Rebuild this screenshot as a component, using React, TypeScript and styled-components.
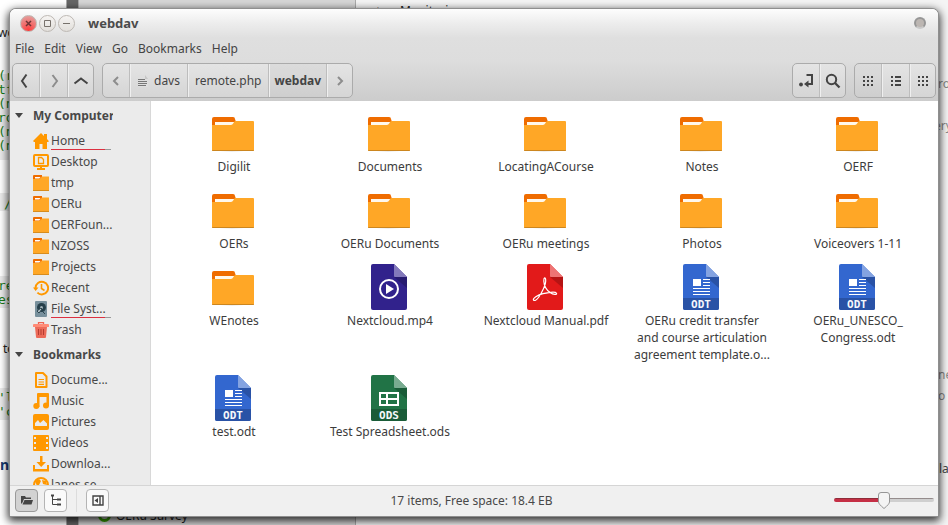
import React, { useState } from "react";
import styled, { createGlobalStyle, css } from "styled-components";

const GlobalStyle = createGlobalStyle`
  * { box-sizing: border-box; }
  body {
    margin: 0;
    overflow: hidden;
    font-family: "Noto Sans", sans-serif;
    font-size: 12px;
    line-height: 17px;
    color: #3c3c3c;
  }
  button {
    font: inherit;
    color: inherit;
    background: none;
    border: 0;
    padding: 0;
    margin: 0;
  }
  svg { display: block; flex: none; }
`;

/* ---------- desktop and the windows behind ---------- */

const Desktop = styled.div`
  position: relative;
  height: 100vh;
  padding: 9px 10px;
  overflow: hidden;
  background: #fff;
`;

const Behind = styled.div`
  position: absolute;
  inset: 0;
  overflow: hidden;
`;

const BackPane = styled.div<{ $x: number; $w?: number; $bg: string }>`
  position: absolute;
  top: 0;
  bottom: 0;
  left: ${(p) => p.$x}px;
  ${(p) => (p.$w ? `width: ${p.$w}px;` : "right: 0;")}
  background: ${(p) => p.$bg};
  border-left: 1px solid #aaa;
`;

const Shade = styled.div<{ $y: number; $h: number }>`
  position: absolute;
  left: 0;
  width: 10px;
  top: ${(p) => p.$y}px;
  height: ${(p) => p.$h}px;
  background: #ebebeb;
`;

const Scrap = styled.span<{ $x: number; $y: number; $color?: string; $mono?: boolean; $bold?: boolean }>`
  position: absolute;
  left: ${(p) => p.$x}px;
  top: ${(p) => p.$y}px;
  white-space: pre;
  color: ${(p) => p.$color ?? "#222"};
  ${(p) =>
    p.$bold &&
    css`
      font-weight: 700;
      font-size: 14px;
    `}
  ${(p) =>
    p.$mono &&
    css`
      font-family: "DejaVu Sans Mono", monospace;
      font-size: 13px;
    `}
`;

const Ring = styled.span`
  position: absolute;
  left: 98px;
  top: 509px;
  width: 13px;
  height: 13px;
  border: 3px solid #36a300;
  border-radius: 50%;
`;

/* ---------- window ---------- */

const WindowShadow = styled.div`
  position: relative;
  height: 100%;
  border-radius: 6px 6px 1px 1px;
  box-shadow: 0 0 0 1px #8f8f8f, 0 3px 9px 2px rgba(0, 0, 0, 0.8);
`;

const Window = styled.main`
  display: flex;
  flex-direction: column;
  height: 100%;
  border-radius: 6px 6px 0 0;
  overflow: hidden;
  background: #fff;
`;

const Header = styled.header`
  flex: none;
  background: linear-gradient(#fdfdfd 0, #ededed 14px, #dfdfdf 29px, #dddddd 52px, #cccccc 92px);
`;

const TitleBar = styled.div`
  display: flex;
  align-items: center;
  height: 28px;
  padding: 0 12px 0 10px;
  color: #4b4b4b;
`;

const WindowButtons = styled.div`
  display: flex;
  gap: 2px;
  margin-right: 13px;
`;

const WindowButton = styled.button<{ $close?: boolean }>`
  display: grid;
  place-items: center;
  width: 17px;
  height: 17px;
  border-radius: 50%;
  border: 1px solid #bdb8b3;
  color: ${(p) => (p.$close ? "#6d3434" : "#77716b")};
  background: ${(p) =>
    p.$close ? "radial-gradient(circle at 50% 95%, #ff3c3c, #e59a98 85%)" : "linear-gradient(#f6f4f2, #e2dfdb)"};
`;

const Title = styled.h1`
  flex: 1;
  margin: 0;
  font-size: 13px;
  font-weight: 700;
`;

const RoundDot = styled.button`
  width: 12px;
  height: 12px;
  border-radius: 50%;
  border: 2px solid #969696;
  border-bottom-color: #c9c9c9;
  background: #bcb6b2;
`;

const MenuBar = styled.nav`
  display: flex;
  align-items: center;
  gap: 10px;
  height: 23px;
  padding-left: 5px;
  color: #444;
`;

const ToolBar = styled.div`
  display: flex;
  align-items: center;
  gap: 8px;
  height: 41px;
  padding: 0 2px;
`;

const Spacer = styled.div`
  flex: 1;
`;

const ButtonGroup = styled.div`
  display: flex;
  height: 35px;
  border: 1px solid #ababab;
  border-radius: 5px;
  overflow: hidden;
  background: linear-gradient(#e4e4e4, #d5d5d5);
`;

const ToolButton = styled.button<{ $pad?: number; $active?: boolean; $dim?: boolean; $wide?: boolean }>`
  display: flex;
  align-items: center;
  justify-content: center;
  gap: 5px;
  min-width: ${(p) => (p.$wide ? 28 : 26)}px;
  padding: 0 ${(p) => p.$pad ?? 0}px;
  color: ${(p) => (p.$dim ? "#8d8d8d" : "#444")};
  font-weight: ${(p) => (p.$active ? 700 : 400)};
  background: ${(p) => (p.$active ? "rgba(0,0,0,0.03)" : "none")};
  & + & {
    border-left: 1px solid #bdbdbd;
    box-shadow: inset 1px 0 #efefef;
  }
`;

const Body = styled.div`
  display: flex;
  flex: 1;
  min-height: 0;
`;

const SideBar = styled.aside`
  flex: none;
  width: 141px;
  overflow: hidden;
  background: #ebebeb;
  border-right: 1px solid #d8d8d8;
  color: #484848;
`;

const SectionTitle = styled.button`
  display: flex;
  align-items: center;
  gap: 10px;
  width: 103px;
  height: 29px;
  padding-left: 5px;
  overflow: hidden;
  white-space: nowrap;
  font-weight: 700;
`;

const Places = styled.ul`
  list-style: none;
  margin: 0;
  padding: 0 39px 0 23px;
`;

const Place = styled.button`
  display: grid;
  grid-template-columns: 16px 1fr;
  align-items: center;
  column-gap: 2px;
  width: 100%;
  height: 21px;
  text-align: left;
  white-space: nowrap;
`;

const PlaceName = styled.span<{ $usage?: boolean }>`
  height: 19px;
  line-height: 19px;
  ${(p) =>
    p.$usage &&
    css`
      background: linear-gradient(90deg, #dc3040 90%, #999 90%) 0 100% / 100% 1px no-repeat;
    `}
`;

const Files = styled.section`
  flex: 1;
  display: grid;
  grid-template-columns: repeat(auto-fill, 156px);
  align-content: start;
  padding: 8px 2px 8px 4px;
  overflow: hidden;
`;

const File = styled.button`
  display: flex;
  flex-direction: column;
  align-items: center;
  justify-content: flex-start;
  gap: 1px;
  padding-bottom: 11px;
`;

const FileName = styled.span`
  padding-left: 2px;
  white-space: pre-line;
`;

const StatusBar = styled.footer`
  display: flex;
  flex: none;
  align-items: center;
  gap: 6px;
  height: 31px;
  padding: 0 4px 2px 5px;
  background: #f0f0f0;
  border-top: 1px solid #d5d5d5;
  color: #484848;
`;

const StatusButton = styled.button<{ $pressed?: boolean }>`
  display: grid;
  place-items: center;
  width: 23px;
  height: 23px;
  border: 1px solid ${(p) => (p.$pressed ? "#9a9a9a" : "#b4b4b4")};
  border-radius: 4px;
  background: ${(p) => (p.$pressed ? "#d2d2d2" : "#fafafa")};
  color: #444;
`;

const Divider = styled.span`
  width: 1px;
  height: 23px;
  margin: 0 3px;
  background: #dcdcdc;
`;

const StatusText = styled.output`
  flex: 1;
  text-align: center;
`;

const thumb = encodeURIComponent(
  `<svg xmlns="http://www.w3.org/2000/svg" width="12" height="17"><path d="M3 .5h6Q11.500.5 11.500 3v7Q11.500 12 6 16.500 .5 12 .5 10V3Q.5.5 3 .5z" fill="#f4f4f4" stroke="#969696"/></svg>`
);

const Zoom = styled.input<{ $fill: number }>`
  appearance: none;
  width: 100px;
  height: 17px;
  margin: 0;
  background: none;
  &::-webkit-slider-runnable-track {
    height: 4px;
    border-radius: 2px;
    background: linear-gradient(rgba(60, 40, 40, 0.4) 1px, transparent 1px),
      linear-gradient(90deg, #c52f45 ${(p) => p.$fill}%, #cfcfcf ${(p) => p.$fill}%);
  }
  &::-webkit-slider-thumb {
    appearance: none;
    width: 12px;
    height: 17px;
    margin-top: -6px;
    background: url("data:image/svg+xml,${thumb}") center no-repeat;
  }
`;

/* ---------- icons ---------- */

const Chevron = ({ d }: { d: string }) => (
  <svg width="16" height="16" viewBox="0 0 16 16" fill="none" stroke="currentColor" strokeWidth="2">
    <path d={d} />
  </svg>
);

const DotGrid = () => (
  <svg width="12" height="12" fill="currentColor">
    {[1, 5, 9].flatMap((y) => [1, 5, 9].map((x) => <rect key={`${x}-${y}`} x={x} y={y} width="2" height="2" />))}
  </svg>
);

const ListGlyph = () => (
  <svg width="12" height="12" fill="currentColor">
    {[1, 5, 9].map((y) => (
      <path key={y} d={`M1 ${y}h2v2H1zM5 ${y}h6v2H5z`} />
    ))}
  </svg>
);

const EnterGlyph = () => (
  <svg width="16" height="16" fill="none" stroke="currentColor" strokeWidth="2">
    <path d="M8.500 2H14v9H9" />
    <path d="M10.500 7.500v7L6 11z" fill="currentColor" stroke="none" />
    <circle cx="3" cy="11.500" r="1.900" fill="currentColor" stroke="none" />
  </svg>
);

const SearchGlyph = () => (
  <svg width="16" height="16" fill="none" stroke="currentColor" strokeWidth="2">
    <circle cx="6.500" cy="6.500" r="4.700" />
    <path d="M10 10l4.500 4.500" strokeWidth="2.300" />
  </svg>
);

const PageGlyph = () => (
  <svg width="12" height="14">
    <path d="M1 1h7l3 4v8H1z" fill="#dedede" />
    <path d="M8 1v4h3z" fill="#c6c6c6" />
    <path d="M1 5.500h7M1 7.500h9M1 9.500h9M1 11.500h8" stroke="#777" />
  </svg>
);

const Folder = () => (
  <svg width="48" height="48">
    <ellipse cx="23" cy="41" rx="17" ry="1.500" fill="#ddd" />
    <path d="M3 20V10q0-2 2-2h19q2 0 2 2l1 3v7z" fill="#ef6c00" />
    <path d="M6 13h21v5H6z" fill="#fff8ec" />
    <path d="M3 16h19q1.500 0 2.300-1.800Q25.300 12 26.500 12H44q1 0 1 1v28q0 1-1 1H4q-1 0-1-1z" fill="#ffa726" />
    <path d="M3 41h42v.3q0 .7-1 .7H4q-1 0-1-.7z" fill="#cc861f" />
  </svg>
);

type DocKind = "mp4" | "pdf" | "odt" | "ods";
const docColors: Record<DocKind, [string, string, string]> = {
  mp4: ["#31228c", "#8379bb", "#271b70"],
  pdf: ["#e21a1a", "#ee7474", "#b51414"],
  odt: ["#3367cf", "#84a3e1", "#2952a6"],
  ods: ["#217346", "#79ab90", "#1a5c38"],
};

const Doc = ({ kind }: { kind: DocKind }) => {
  const [base, fold, dark] = docColors[kind];
  return (
    <svg width="48" height="48">
      <path d="M8 1h21l13 13v31q0 2-2 2H8q-2 0-2-2V3q0-2 2-2z" fill={base} />
      <path d="M29 14h13v11z" fill={dark} />
      <path d="M29 1l13 13H30q-1 0-1-1z" fill={fold} />
      {kind === "mp4" && (
        <g>
          <circle cx="24" cy="26" r="9" fill="none" stroke="#fff" strokeWidth="2" />
          <path d="M21 21v10l8-5z" fill="#fff" />
        </g>
      )}
      {kind === "pdf" && (
        <path
          d="M12.500 37c-1-1.500 4-5 9.500-6.300 5-1.200 12.500-2.200 13.500-.5.800 1.800-3 1.800-6.500-.7-3.500-2.500-6-7.500-6.200-11.500 0-4 1.600-4 1.900-1 .4 4.500-4 13-7.200 17.500-2 2.700-4 3.700-5 2.500z"
          fill="none"
          stroke="#fff"
          strokeWidth="1.200"
        />
      )}
      {(kind === "odt" || kind === "ods") && (
        <g>
          <path d="M6 35h36v10q0 2-2 2H8q-2 0-2-2z" fill={dark} />
          <text x="24" y="45" textAnchor="middle" fontFamily="DejaVu Sans Mono" fontWeight="700" fontSize="11" fill="#f5f7fb">
            {kind.toUpperCase()}
          </text>
        </g>
      )}
      {kind === "odt" && (
        <g>
          <path d="M16 16h8v7h-8z" fill="#fff" />
          <path d="M26 16.500h7M26 19.500h7M26 22.500h7M16 25.500h17M16 28.500h17M16 31.500h17" stroke="#fff" />
        </g>
      )}
      {kind === "ods" && (
        <path d="M15 19h18v12H15zM15 25h18M22 19v12" fill="none" stroke="#fff" strokeWidth="2" />
      )}
    </svg>
  );
};

type PlaceIcon =
  | "home" | "desktop" | "folder" | "recent" | "disk" | "trash"
  | "document" | "music" | "picture" | "video" | "download" | "globe";

const O = "#ff9800";
const placeArt: Record<PlaceIcon, React.ReactNode> = {
  home: <path d="M8 0l3 3V1h3v5l2 2.200-1 .8h-1v7H9.500v-5h-3v5H2V9H1L0 8z" fill={O} />,
  desktop: (
    <g fill="none" stroke={O} strokeWidth="2">
      <rect x="1" y="1" width="14" height="11" rx="1" />
      <path d="M8 12v3M4 15h8" />
      <path d="M5.500 3.500h3l2 2v4h-5z" strokeWidth="1.300" />
    </g>
  ),
  folder: (
    <g>
      <path d="M0 5V1q0-1 1-1h8v5z" fill="#ef6c00" />
      <path d="M0 4h6.500L9 1.500H16V16H0z" fill="#ffa726" />
      <path d="M2 2h5.500l-1.200 1.500H2z" fill="#fff" />
      <path d="M0 15h16v1H0z" fill="#d78c1e" />
    </g>
  ),
  recent: (
    <g fill="none" stroke={O} strokeWidth="2">
      <path d="M2.500 8a6.300 6.300 0 1 1 1.900 4.600" />
      <path d="M8.500 4v4.500l3 2" strokeWidth="1.600" />
      <path d="M0 7.500h5.500L2.600 11z" fill={O} stroke="none" />
    </g>
  ),
  disk: (
    <g>
      <rect x="2" width="12" height="16" rx="1" fill="#78909c" />
      <circle cx="8.500" cy="6.500" r="4.500" fill="#263f4a" />
      <circle cx="8.500" cy="6.500" r="1.500" fill="#a6b6bc" />
      <path d="M4 10l4-3 1 1-3 4zM9 10l3 3" fill="#b9c6ca" stroke="#2c444e" />
    </g>
  ),
  trash: (
    <g>
      <path d="M0 3q0-1 1-1h14q1 0 1 1v2H0z" fill="#ff8a75" />
      <path d="M5.500 2V.7h5V2" fill="none" stroke="#ee6352" strokeWidth="1.300" />
      <path d="M2 5h12l-1 10q0 1-1 1H4q-1 0-1-1z" fill="#ec6a58" />
      <path d="M5.500 7v6M8 7v6M10.500 7v6" stroke="#b53c31" />
    </g>
  ),
  document: (
    <g fill="none" stroke={O} strokeWidth="2">
      <path d="M3 1h7l3.500 3.500V15H3z" strokeLinejoin="round" />
      <path d="M5.500 7.500h5.500M5.500 10h5.500M5.500 12.300h5.500" strokeWidth="1.200" />
    </g>
  ),
  music: (
    <g fill={O}>
      <path d="M4 1q0-1 1-1h10q1 0 1 1v12h-2.500V4h-7v10H4z" />
      <circle cx="3.300" cy="13" r="3" />
      <circle cx="13" cy="12.500" r="3" />
    </g>
  ),
  picture: (
    <g>
      <rect width="16" height="16" rx="2" fill={O} />
      <path d="M2 12V9l3-3 2 3 3.500-3L14 9.500V12z" fill="#ebebeb" />
    </g>
  ),
  video: (
    <g>
      <rect width="16" height="16" rx="1" fill={O} />
      <path d="M2 2v13M14 2v13" stroke="#ebebeb" strokeWidth="2" strokeDasharray="2 3" />
    </g>
  ),
  download: (
    <g fill={O}>
      <path d="M7 0h2.500v6H13L8.200 11 3.500 6H7z" />
      <path d="M0 9h2v4h12V9h2v6.500H0z" />
    </g>
  ),
  globe: (
    <g>
      <circle cx="8" cy="8" r="7" fill="none" stroke={O} strokeWidth="2" />
      <path d="M2 4l4-2 2 2-2 4-2 1zM9 3l4 1 1 4-4-1z" fill={O} />
    </g>
  ),
};

/* ---------- data ---------- */

const menus = ["File", "Edit", "View", "Go", "Bookmarks", "Help"];

const sections: { title: string; places: { name: string; icon: PlaceIcon; usage?: boolean }[] }[] = [
  {
    title: "My Computer",
    places: [
      { name: "Home", icon: "home", usage: true },
      { name: "Desktop", icon: "desktop" },
      { name: "tmp", icon: "folder" },
      { name: "OERu", icon: "folder" },
      { name: "OERFoun...", icon: "folder" },
      { name: "NZOSS", icon: "folder" },
      { name: "Projects", icon: "folder" },
      { name: "Recent", icon: "recent" },
      { name: "File Syst...", icon: "disk", usage: true },
      { name: "Trash", icon: "trash" },
    ],
  },
  {
    title: "Bookmarks",
    places: [
      { name: "Docume...", icon: "document" },
      { name: "Music", icon: "music" },
      { name: "Pictures", icon: "picture" },
      { name: "Videos", icon: "video" },
      { name: "Downloa...", icon: "download" },
      { name: "lanes.se", icon: "globe" },
    ],
  },
];

const files: { name: string; kind?: DocKind }[] = [
  { name: "Digilit" },
  { name: "Documents" },
  { name: "LocatingACourse" },
  { name: "Notes" },
  { name: "OERF" },
  { name: "OERs" },
  { name: "OERu Documents" },
  { name: "OERu meetings" },
  { name: "Photos" },
  { name: "Voiceovers 1-11" },
  { name: "WEnotes" },
  { name: "Nextcloud.mp4", kind: "mp4" },
  { name: "Nextcloud Manual.pdf", kind: "pdf" },
  { name: "OERu credit transfer\nand course articulation\nagreement template.o...", kind: "odt" },
  { name: "OERu_UNESCO_\nCongress.odt", kind: "odt" },
  { name: "test.odt", kind: "odt" },
  { name: "Test Spreadsheet.ods", kind: "ods" },
];

const green = "#177a17";
const codeScraps: [number, string][] = [
  [67, "(r"], [81, "tf"], [95, "(n"], [109, "ro"], [123, "(n"], [137, "(n"], [277, "re"], [291, "es"], [389, "'l"], [403, "'c"],
];

const Backdrop = () => (
  <Behind aria-hidden="true">
    <BackPane $x={66} $w={12} $bg="#666" />
    <BackPane $x={78} $w={277} $bg="#d6d6d6" />
    <BackPane $x={355} $bg="#f4f4f4" />
    <Shade $y={74} $h={86} />
    <Shade $y={193} $h={18} />
    <Shade $y={276} $h={32} />
    <Shade $y={388} $h={32} />
    <Scrap $x={-2} $y={24}>wo</Scrap>
    {codeScraps.map(([y, t]) => (
      <Scrap key={y} $x={-2} $y={y} $mono $color={green}>{t}</Scrap>
    ))}
    <Scrap $x={4} $y={195} $mono $color={green}>/</Scrap>
    <Scrap $x={3} $y={340}>to</Scrap>
    <Scrap $x={0} $y={456} $bold $color="#163a70">n</Scrap>
    <Scrap $x={372} $y={1}>▲</Scrap>
    <Scrap $x={400} $y={2}>Monitoring</Scrap>
    <Scrap $x={116} $y={507}>OERu Survey</Scrap>
    <Scrap $x={938} $y={75} $color="#888">ro</Scrap>
    <Scrap $x={934} $y={117} $color="#888">ery</Scrap>
    <Scrap $x={938} $y={366} $color="#888">ne</Scrap>
    <Scrap $x={938} $y={387} $color="#888">o</Scrap>
    <Scrap $x={939} $y={460} $color="#444">la</Scrap>
    <Ring />
  </Behind>
);

export default function App() {
  const [zoom, setZoom] = useState(50);
  return (
    <Desktop>
      <GlobalStyle />
      <Backdrop />
      <WindowShadow>
        <Window>
          <Header>
            <TitleBar>
              <WindowButtons>
                <WindowButton $close aria-label="Close">
                  <svg width="7" height="7" stroke="currentColor" strokeWidth="1.500"><path d="M1 1l5 5M6 1L1 6" /></svg>
                </WindowButton>
                <WindowButton aria-label="Maximize">
                  <svg width="7" height="7" stroke="currentColor" fill="none"><path d="M.5.5h6v6h-6z" /></svg>
                </WindowButton>
                <WindowButton aria-label="Minimize">
                  <svg width="7" height="7" stroke="currentColor"><path d="M0 3.500h7" /></svg>
                </WindowButton>
              </WindowButtons>
              <Title>webdav</Title>
              <RoundDot aria-label="Window menu" />
            </TitleBar>
            <MenuBar>
              {menus.map((m) => (
                <button key={m}>{m}</button>
              ))}
            </MenuBar>
            <ToolBar>
              <ButtonGroup>
                <ToolButton aria-label="Back"><Chevron d="M8.500 1.500L4 8l4.500 6.500" /></ToolButton>
                <ToolButton aria-label="Forward" $dim $wide><Chevron d="M6.500 2L11 8l-4.500 6" /></ToolButton>
                <ToolButton aria-label="Up"><Chevron d="M1.500 10.500L8 5.500l6.500 5" /></ToolButton>
              </ButtonGroup>
              <ButtonGroup>
                <ToolButton aria-label="Earlier folders" $dim><Chevron d="M10 4L6 8l4 4" /></ToolButton>
                <ToolButton $pad={7}><PageGlyph />davs</ToolButton>
                <ToolButton $pad={7}>remote.php</ToolButton>
                <ToolButton $pad={5} $active>webdav</ToolButton>
                <ToolButton aria-label="Later folders" $dim><Chevron d="M6 4l4 4-4 4" /></ToolButton>
              </ButtonGroup>
              <Spacer />
              <ButtonGroup>
                <ToolButton aria-label="Toggle location entry"><EnterGlyph /></ToolButton>
                <ToolButton aria-label="Search"><SearchGlyph /></ToolButton>
              </ButtonGroup>
              <ButtonGroup>
                <ToolButton aria-label="Icon view" $active><DotGrid /></ToolButton>
                <ToolButton aria-label="List view" $wide><ListGlyph /></ToolButton>
                <ToolButton aria-label="Compact view"><DotGrid /></ToolButton>
              </ButtonGroup>
            </ToolBar>
          </Header>
          <Body>
            <SideBar>
              {sections.map((s) => (
                <React.Fragment key={s.title}>
                  <SectionTitle>
                    <svg width="8" height="5"><path d="M0 0h8L4 5z" fill="#444" /></svg>
                    {s.title}
                  </SectionTitle>
                  <Places>
                    {s.places.map((p) => (
                      <li key={p.name}>
                        <Place>
                          <svg width="16" height="16">{placeArt[p.icon]}</svg>
                          <PlaceName $usage={p.usage}>{p.name}</PlaceName>
                        </Place>
                      </li>
                    ))}
                  </Places>
                </React.Fragment>
              ))}
            </SideBar>
            <Files aria-label="Files">
              {files.map((f) => (
                <File key={f.name}>
                  {f.kind ? <Doc kind={f.kind} /> : <Folder />}
                  <FileName>{f.name}</FileName>
                </File>
              ))}
            </Files>
          </Body>
          <StatusBar>
            <StatusButton aria-label="Show places" $pressed>
              <svg width="12" height="10" fill="currentColor"><path d="M0 1h4l1 1.500h5V4H3L1 8.500H0zM3.500 5H12l-1.500 4.500H1.500z" /></svg>
            </StatusButton>
            <StatusButton aria-label="Show tree">
              <svg width="12" height="12" fill="none" stroke="currentColor"><path d="M2.500 1v9.500H8M2.500 5.500H8" /><path d="M1 1.500h3M7 5.500h4M7 10.500h4" strokeWidth="2" /></svg>
            </StatusButton>
            <Divider />
            <StatusButton aria-label="Hide sidebar">
              <svg width="12" height="11" fill="none" stroke="currentColor"><path d="M1 1h10v9H1zM8 1v9" strokeWidth="1.400" /><path d="M6 3v5L2.500 5.500z" fill="currentColor" stroke="none" /></svg>
            </StatusButton>
            <StatusText>17 items, Free space: 18.4 EB</StatusText>
            <Zoom
              type="range"
              aria-label="Icon size"
              min={0}
              max={100}
              value={zoom}
              $fill={zoom}
              onChange={(e) => setZoom(Number(e.target.value))}
            />
          </StatusBar>
        </Window>
      </WindowShadow>
    </Desktop>
  );
}
